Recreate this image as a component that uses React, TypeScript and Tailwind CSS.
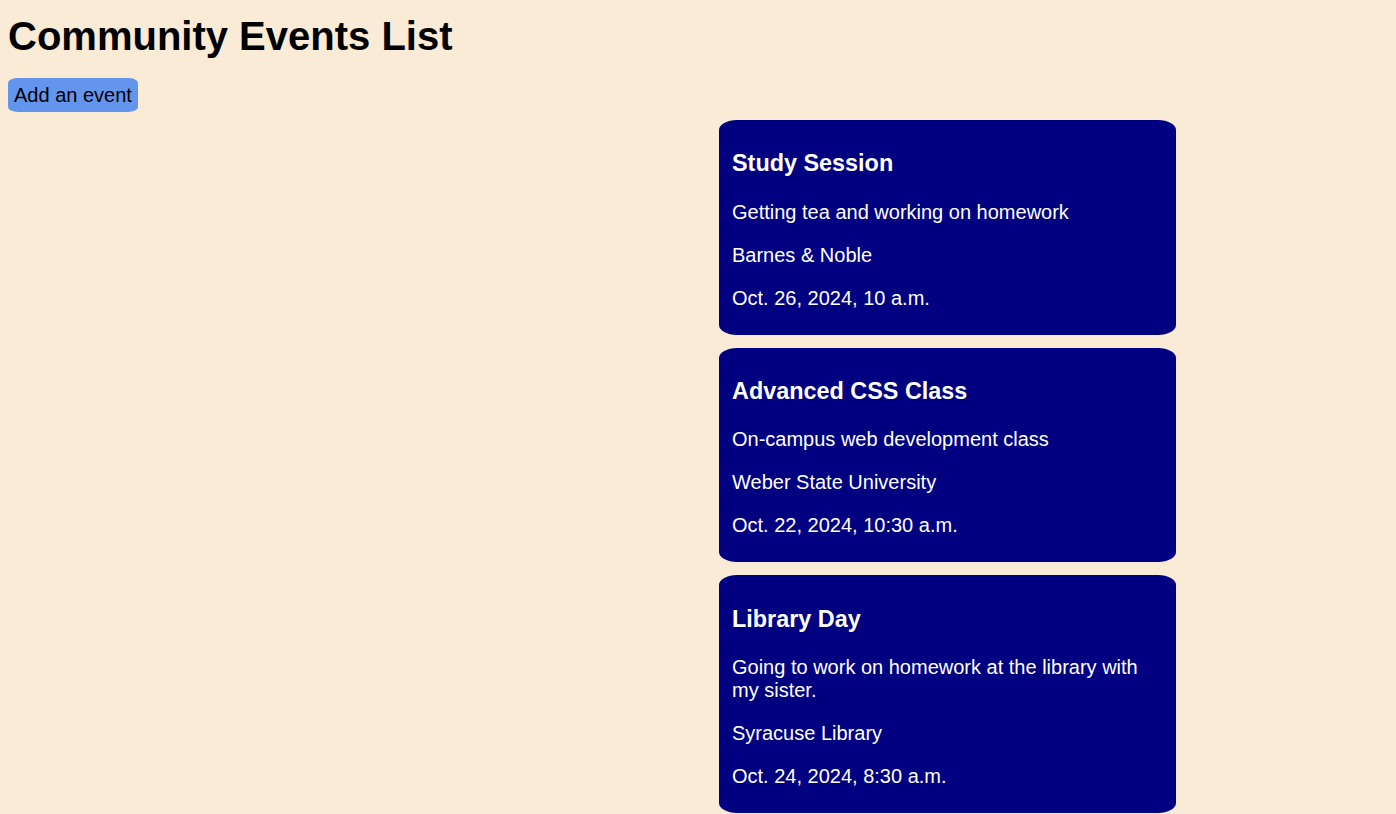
const events = [
  {
    title: 'Study Session',
    description: 'Getting tea and working on homework',
    location: 'Barnes & Noble',
    date: 'Oct. 26, 2024, 10 a.m.',
  },
  {
    title: 'Advanced CSS Class',
    description: 'On-campus web development class',
    location: 'Weber State University',
    date: 'Oct. 22, 2024, 10:30 a.m.',
  },
  {
    title: 'Library Day',
    description: 'Going to work on homework at the library with my sister.',
    location: 'Syracuse Library',
    date: 'Oct. 24, 2024, 8:30 a.m.',
  },
];

export default function App() {
  return (
    <div className="min-h-screen bg-[#faebd7] p-2 font-['Liberation_Sans',Arial,sans-serif] text-[20px] leading-[1.149] text-black">
      <h1 className="mt-[6px] mb-[18px] text-[40px] font-bold leading-[1.149]">
        Community Events List
      </h1>
      <button className="block rounded-[10px/5px] bg-[#6495ed] px-[6px] pt-[6px] pb-[5px] text-[20px] leading-[23px] text-black">
        Add an event
      </button>
      <div className="ml-[711px] mt-[8px] flex w-[457px] flex-col gap-[13px]">
        {events.map((ev) => (
          <div
            key={ev.title}
            className="rounded-[18px/10px] bg-[#000080] px-[13px] pt-[7px] pb-[5px] text-white"
          >
            <h3 className="my-[23.4px] text-[23.4px] font-bold leading-[1.149]">
              {ev.title}
            </h3>
            <p className="my-[20px] leading-[23px]">{ev.description}</p>
            <p className="my-[20px] leading-[23px]">{ev.location}</p>
            <p className="my-[20px] leading-[23px]">{ev.date}</p>
          </div>
        ))}
      </div>
    </div>
  );
}
